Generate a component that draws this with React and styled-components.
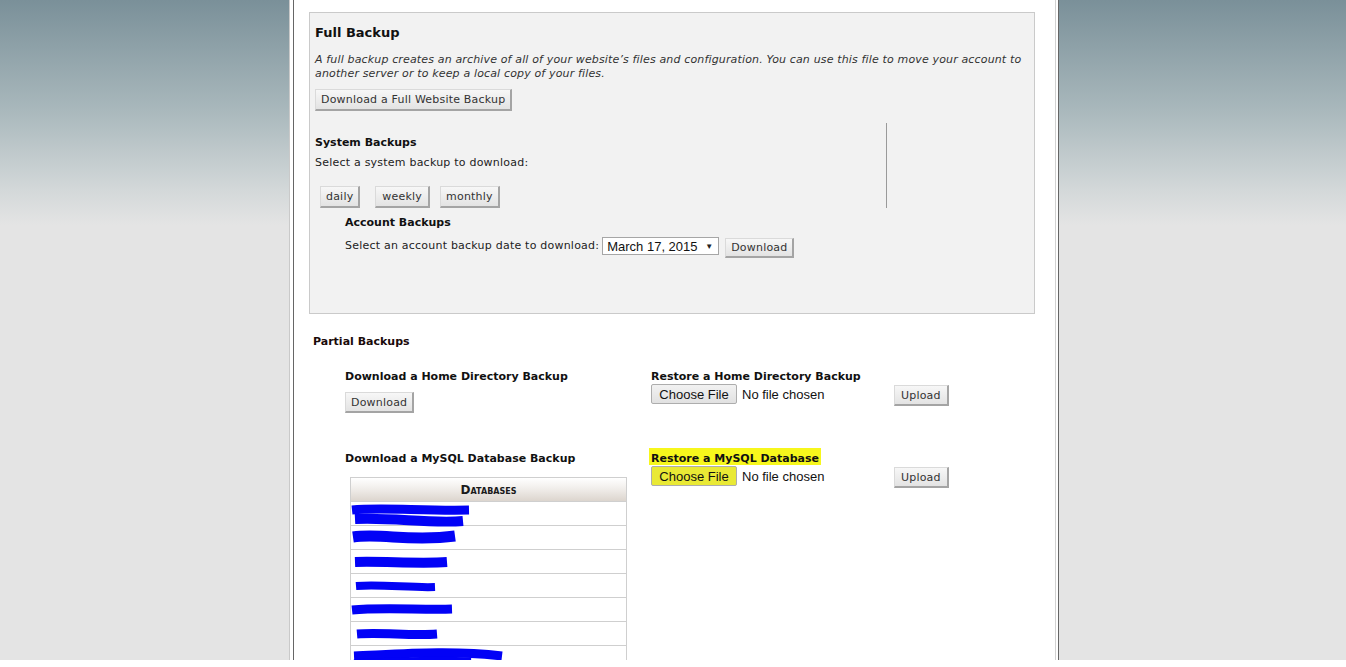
import React from 'react';
import styled, { createGlobalStyle } from 'styled-components';

const GlobalStyle = createGlobalStyle`
  html, body {
    margin: 0;
    padding: 0;
    background: #fff;
  }
  body {
    font-family: "DejaVu Sans", Verdana, sans-serif;
    font-size: 11px;
    letter-spacing: 0.22px;
    color: #222;
  }
`;

const Backdrop = styled.div`
  height: 660px;
  overflow: hidden;
  display: flex;
  justify-content: center;
  background: linear-gradient(#7a9099 0, #a9b8bc 110px, #d3d8d9 190px, #e4e4e4 225px, #e4e4e4 100%);
`;

const Column = styled.div`
  width: 770px;
  margin-left: 2px;
  box-sizing: border-box;
  background: #fff;
  border-left: 1px solid #c9c9c9;
  border-right: 1px solid #666;
  padding: 0 2px 0 3px;
`;

const Inner = styled.div`
  height: 100%;
  box-sizing: border-box;
  border-left: 1px solid #666;
  border-right: 1px solid #d2d2d2;
  padding: 12px 20px 0 15px;
`;

const FullBox = styled.div`
  height: 302px;
  box-sizing: border-box;
  background: #f2f2f2;
  border: 1px solid #cacaca;
  padding: 0 5px;
`;

const BoxTitle = styled.div`
  margin-top: 12px;
  font-size: 13px;
  line-height: 16px;
  font-weight: bold;
  letter-spacing: 0;
  color: #111;
`;

const Intro = styled.p`
  margin: 12px 0 0;
  font-style: italic;
  line-height: 14px;
  letter-spacing: 0.15px;
  color: #333;
`;

const Btn = styled.button`
  display: inline-block;
  box-sizing: border-box;
  height: ${(p) => p.$h || 22}px;
  padding: 0 ${(p) => p.$px ?? 5}px;
  margin: 0;
  font-family: "DejaVu Sans", Verdana, sans-serif;
  font-size: 11px;
  letter-spacing: 0.2px;
  color: #333;
  background: linear-gradient(#f7f7f7, #e3e3e3);
  border: 1px solid #dadada;
  border-right: 2px solid #a4a4a4;
  border-bottom: 2px solid #a4a4a4;
  border-radius: 0;
`;

const BtnLine = styled.div`
  margin-top: ${(p) => p.$mt || 0}px;
  margin-left: ${(p) => p.$ml || 0}px;
`;

const SystemPanel = styled.div`
  margin-top: 12px;
  width: 572px;
  box-sizing: border-box;
  border-right: 1px solid #9a9a9a;
  padding-top: 13px;
`;

const SubTitle = styled.div`
  font-weight: bold;
  line-height: 14px;
  letter-spacing: 0;
  color: #111;
  margin-top: ${(p) => p.$mt || 0}px;
`;

const Line = styled.div`
  line-height: 14px;
  margin-top: ${(p) => p.$mt || 0}px;
`;

const PeriodRow = styled.div`
  display: flex;
  margin-top: 16px;
  padding-left: 5px;
`;

const PeriodBtn = styled(Btn)`
  margin-right: ${(p) => p.$gap || 0}px;
`;

const AccountPanel = styled.div`
  padding-left: 30px;
`;

const SelectRow = styled.div`
  display: flex;
  align-items: flex-start;
  margin-top: 7px;
`;

const RowText = styled.span`
  line-height: 18px;
`;

const FakeSelect = styled.div`
  display: flex;
  align-items: center;
  justify-content: space-between;
  width: 117px;
  height: 18px;
  box-sizing: border-box;
  margin-left: 3px;
  padding: 0 5px 0 4px;
  background: #fff;
  border: 1px solid #a6a6a6;
  font-family: "Liberation Sans", Arial, sans-serif;
  font-size: 13px;
  letter-spacing: 0;
  color: #111;
`;

const Arrow = styled.span`
  font-size: 8px;
  color: #222;
`;

const Partial = styled.div`
  padding-left: 4px;
`;

const SectionTitle = styled.div`
  margin-top: 21px;
  font-weight: bold;
  line-height: 14px;
  letter-spacing: 0;
  color: #1a0a0a;
`;

const PartialRow = styled.div`
  display: flex;
  height: ${(p) => p.$h || 'auto'};
  margin-top: ${(p) => p.$mt || 0}px;
  padding-left: 32px;
`;

const LeftCell = styled.div`
  width: 306px;
`;

const RightCell = styled.div`
  flex: 1;
`;

const Highlight = styled.span`
  display: inline-block;
  background: #f7f71c;
  padding: 4px 2px 0;
  margin: -4px 0 0 -2px;
  line-height: 13px;
`;

const FileRow = styled.div`
  display: flex;
  align-items: flex-start;
`;

const FilePicker = styled.div`
  display: flex;
  align-items: center;
  width: 243px;
  font-family: "Liberation Sans", Arial, sans-serif;
  font-size: 13px;
  letter-spacing: 0;
  color: #111;
`;

const ChooseBtn = styled.button`
  height: 20px;
  box-sizing: border-box;
  width: 86px;
  padding: 0;
  margin: 0 5px 0 0;
  font-family: "Liberation Sans", Arial, sans-serif;
  font-size: 13px;
  color: #111;
  border: 1px solid #adadad;
  border-radius: 2px;
  background: ${(p) => (p.$marked ? '#e9e935' : 'linear-gradient(#f2f2f2, #e1e1e1)')};
`;

const DbTable = styled.div`
  margin: 11px 0 0 5px;
  width: 277px;
  box-sizing: border-box;
  border: 1px solid #cfcfcf;
  border-bottom: none;
`;

const DbHead = styled.div`
  height: 23px;
  display: flex;
  align-items: center;
  justify-content: center;
  border-bottom: 1px solid #cfcfcf;
  background: linear-gradient(#ffffff, #f1eeeb 45%, #dcd5ce);
  font-variant: small-caps;
  font-weight: bold;
  font-size: 12px;
  letter-spacing: 0;
  color: #1a1a1a;
`;

const DbRow = styled.div`
  height: 23px;
  border-bottom: 1px solid #cfcfcf;
  background: #fff;
`;

const Scribble = styled.svg`
  display: block;
  overflow: visible;
`;

const blue = '#0202f6';

const rows = [
  [
    { d: 'M1 8 C 30 5, 70 9, 118 8', w: 9 },
    { d: 'M4 17 C 40 15, 80 22, 112 19', w: 10 },
  ],
  [{ d: 'M2 11 C 30 7, 60 16, 104 10', w: 11 }],
  [{ d: 'M4 12 C 30 11, 70 14, 96 12', w: 10 }],
  [{ d: 'M5 12 C 30 10, 60 14, 84 13', w: 8 }],
  [{ d: 'M1 12 C 30 9, 70 12, 101 11', w: 9 }],
  [{ d: 'M6 12 C 30 10, 60 14, 86 12', w: 9 }],
  [
    { d: 'M3 10 C 50 8, 100 4, 151 10', w: 9 },
    { d: 'M3 18 C 40 16, 80 14, 120 16', w: 9 },
  ],
];

const DbLine = ({ strokes }) => (
  <DbRow>
    <Scribble width="160" height="24">
      {strokes.map((s, i) => (
        <path key={i} d={s.d} stroke={blue} strokeWidth={s.w} fill="none" strokeLinejoin="round" />
      ))}
    </Scribble>
  </DbRow>
);

const App = () => {
  return (
    <>
      <GlobalStyle />
      <Backdrop>
        <Column>
          <Inner>
            <FullBox>
              <BoxTitle>Full Backup</BoxTitle>
              <Intro>
                A full backup creates an archive of all of your website’s files and configuration. You can use this file to move your account to
                <br />
                another server or to keep a local copy of your files.
              </Intro>
              <BtnLine $mt={8}>
                <Btn>Download a Full Website Backup</Btn>
              </BtnLine>
              <SystemPanel>
                <SubTitle>System Backups</SubTitle>
                <Line $mt={6}>Select a system backup to download:</Line>
                <PeriodRow>
                  <PeriodBtn $h={22} $px={5} $gap={15}>daily</PeriodBtn>
                  <PeriodBtn $h={22} $px={6} $gap={10}>weekly</PeriodBtn>
                  <PeriodBtn $h={22} $px={5}>monthly</PeriodBtn>
                </PeriodRow>
              </SystemPanel>
              <AccountPanel>
                <SubTitle $mt={8}>Account Backups</SubTitle>
                <SelectRow>
                  <RowText>Select an account backup date to download:</RowText>
                  <FakeSelect>
                    <span>March 17, 2015</span>
                    <Arrow>▼</Arrow>
                  </FakeSelect>
                  <BtnLine $mt={1} $ml={6}>
                    <Btn $h={20}>Download</Btn>
                  </BtnLine>
                </SelectRow>
              </AccountPanel>
            </FullBox>

            <Partial>
              <SectionTitle>Partial Backups</SectionTitle>
              <PartialRow $h="82px" $mt={21}>
                <LeftCell>
                  <SubTitle>Download a Home Directory Backup</SubTitle>
                  <BtnLine $mt={8}>
                    <Btn $h={21}>Download</Btn>
                  </BtnLine>
                </LeftCell>
                <RightCell>
                  <SubTitle>Restore a Home Directory Backup</SubTitle>
                  <FileRow>
                    <FilePicker>
                      <ChooseBtn>Choose File</ChooseBtn>
                      No file chosen
                    </FilePicker>
                    <BtnLine $mt={1}>
                      <Btn $h={21} $px={6}>Upload</Btn>
                    </BtnLine>
                  </FileRow>
                </RightCell>
              </PartialRow>
              <PartialRow>
                <LeftCell>
                  <SubTitle>Download a MySQL Database Backup</SubTitle>
                  <DbTable>
                    <DbHead>Databases</DbHead>
                    {rows.map((r, i) => (
                      <DbLine key={i} strokes={r} />
                    ))}
                  </DbTable>
                </LeftCell>
                <RightCell>
                  <SubTitle>
                    <Highlight>Restore a MySQL Database</Highlight>
                  </SubTitle>
                  <FileRow>
                    <FilePicker>
                      <ChooseBtn $marked>Choose File</ChooseBtn>
                      No file chosen
                    </FilePicker>
                    <BtnLine $mt={1}>
                      <Btn $h={21} $px={6}>Upload</Btn>
                    </BtnLine>
                  </FileRow>
                </RightCell>
              </PartialRow>
            </Partial>
          </Inner>
        </Column>
      </Backdrop>
    </>
  );
};

export default App;
